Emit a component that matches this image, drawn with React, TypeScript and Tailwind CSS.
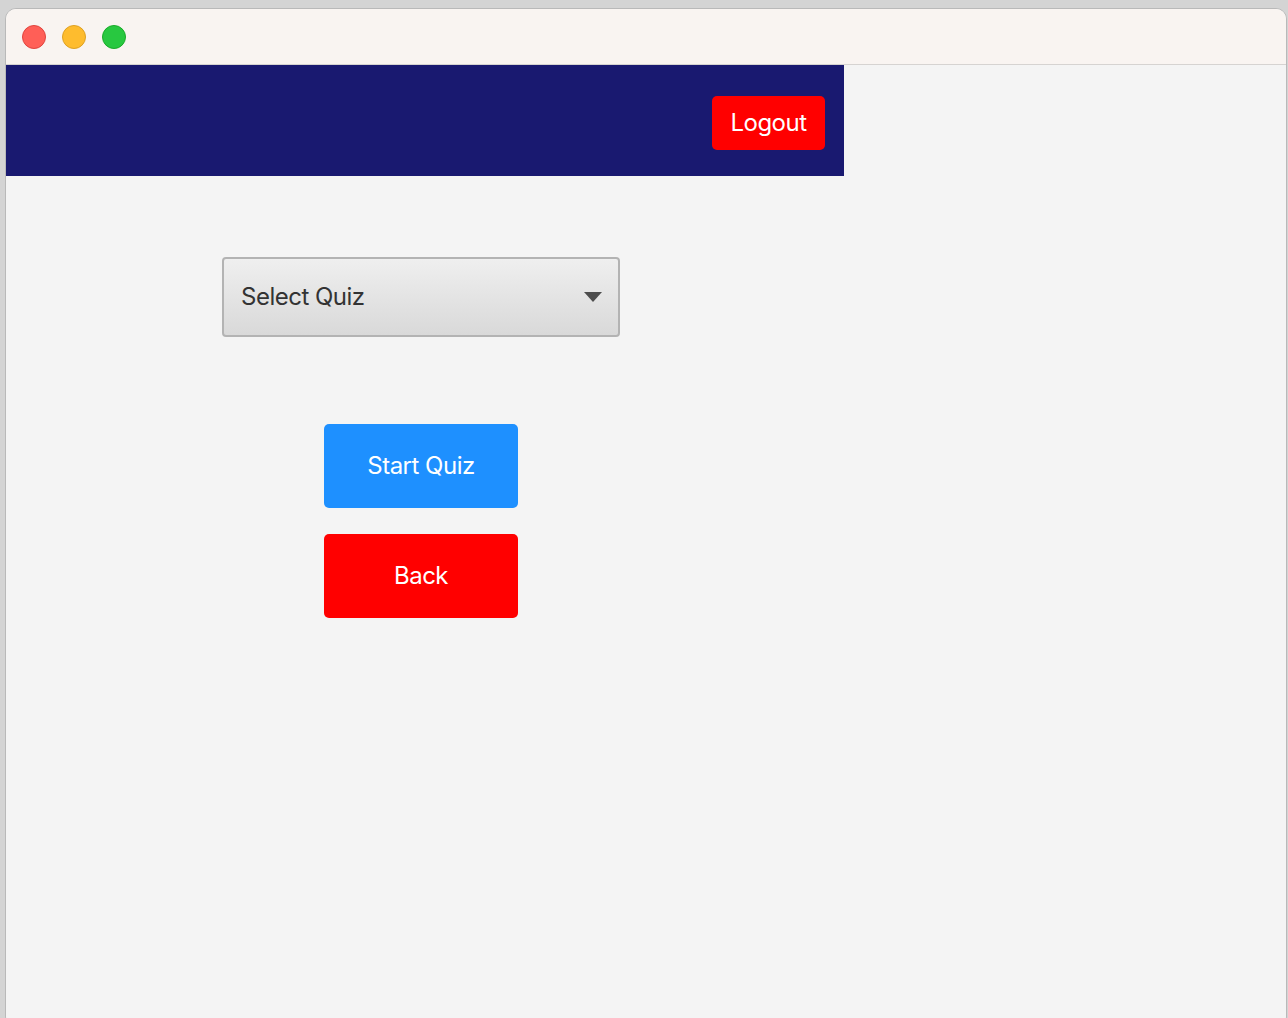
const App = () => {
  return (
    <div className="h-[1018px] w-[1288px] overflow-hidden bg-[#d4d4d4] pt-[8px] pl-[5px] pr-[1px] font-['Inter','Liberation_Sans',sans-serif] tracking-[-0.5px]">
      <div className="flex h-[1020px] flex-col overflow-hidden rounded-[11px] border border-[#b9b9b9] bg-[#f4f4f4]">
        <div className="flex h-[56px] shrink-0 items-center gap-[16px] border-b border-[#d6d3d1] bg-[#f9f4f1] pl-[16px]">
          <span className="h-[24px] w-[24px] rounded-full border border-[#e0443e] bg-[#ff5f57]" />
          <span className="h-[24px] w-[24px] rounded-full border border-[#dea123] bg-[#febc2e]" />
          <span className="h-[24px] w-[24px] rounded-full border border-[#1aab29] bg-[#28c840]" />
        </div>
        <div className="flex h-[111px] w-[838px] items-start justify-end bg-[#191970] pt-[31px] pr-[19px]">
          <button className="h-[54px] w-[113px] rounded-[5px] bg-[#ff0000] text-[24px] text-white">Logout</button>
        </div>
        <div className="pl-[216px] pt-[81px]">
          <div className="flex h-[80px] w-[398px] items-center justify-between rounded-[4px] border-2 border-[#b3b3b3] bg-gradient-to-b from-[#efefef] to-[#d9d9d9] pl-[17px] pr-[16px]">
            <span className="text-[24px] text-[#333333]">Select Quiz</span>
            <svg width="18" height="10" viewBox="0 0 18 10">
              <path d="M0 0 L18 0 L9 10 Z" fill="#4d4d4d" />
            </svg>
          </div>
        </div>
        <div className="flex flex-col gap-[26px] pl-[318px] pt-[87px]">
          <button className="h-[84px] w-[194px] rounded-[5px] bg-[#1e90ff] text-[24px] text-white">Start Quiz</button>
          <button className="h-[84px] w-[194px] rounded-[5px] bg-[#ff0000] text-[24px] text-white">Back</button>
        </div>
      </div>
    </div>
  );
};

export default App;
